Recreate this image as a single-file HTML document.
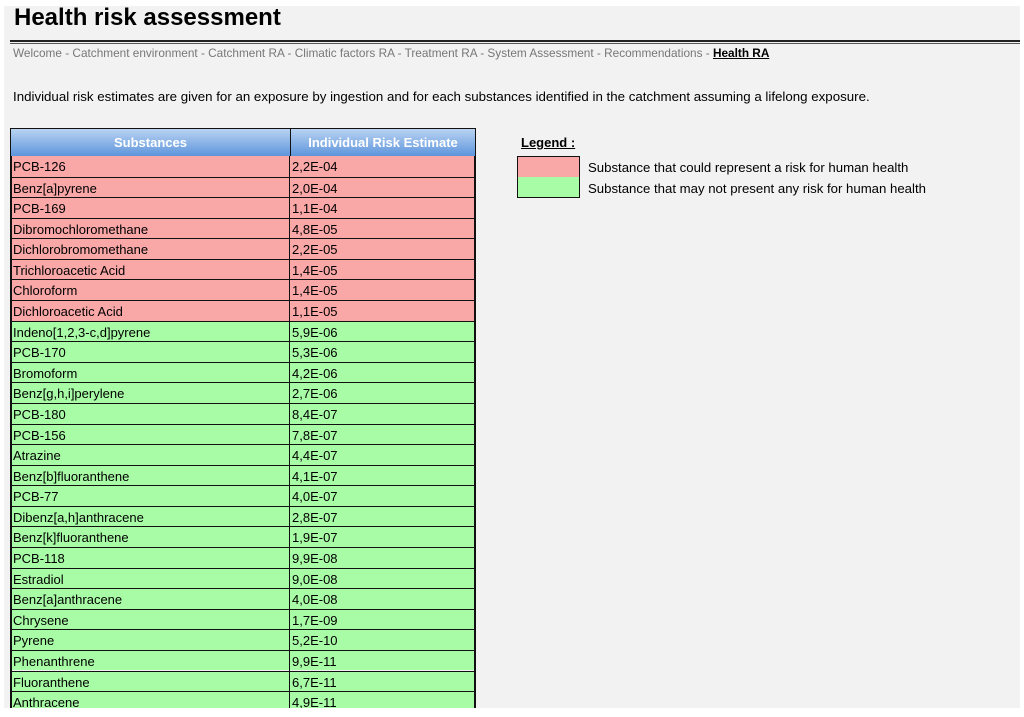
<!DOCTYPE html>
<html><head><style>
body{margin:0;background:#fff;font-family:"Liberation Sans",sans-serif;}
#pg{position:absolute;left:4px;top:6px;width:1016px;height:702px;background:#f2f2f2;overflow:hidden}
.a{position:absolute;white-space:nowrap}
.r{position:absolute;left:6px;width:466px;height:20.58px;box-sizing:border-box;border-top:1px solid #111;font-size:13px;color:#000}
.r span{position:absolute;top:3px}
</style></head><body>
<div id="pg">
<div class="a" style="left:10px;top:-2px;font-size:24px;font-weight:bold;color:#000">Health risk assessment</div>
<div class="a" style="left:6px;top:34px;width:1010px;height:2px;background:#222"></div>
<div class="a" style="left:6px;top:37px;width:1010px;height:1px;background:#555"></div>
<div class="a" style="left:9px;top:40px;font-size:11.8px;color:#777">Welcome - Catchment environment - Catchment RA - Climatic factors RA - Treatment RA - System Assessment - Recommendations - <b style="color:#000;text-decoration:underline">Health RA</b></div>
<div class="a" style="left:9px;top:83px;font-size:13.3px;color:#000">Individual risk estimates are given for an exposure by ingestion and for each substances identified in the catchment assuming a lifelong exposure.</div>
<div class="a" style="left:6px;top:122px;width:464px;height:27px;border:1px solid #111;background:linear-gradient(#b9d3f2,#5e95dc);color:#fff;font-weight:bold;font-size:13px">
<div class="a" style="left:0;width:279px;top:6px;text-align:center">Substances</div>
<div class="a" style="left:279px;top:0;width:1px;height:27px;background:#111"></div>
<div class="a" style="left:280px;width:184px;top:6px;text-align:center">Individual Risk Estimate</div>
</div>
<div id="rows"></div>
<div class="a" style="left:6px;top:150px;width:2px;height:560px;background:#111"></div>
<div class="a" style="left:470px;top:150px;width:2px;height:560px;background:#111"></div>
<div class="a" style="left:285px;top:150px;width:1px;height:560px;background:#111"></div>
<div class="a" style="left:517px;top:129px;font-size:13px;font-weight:bold;text-decoration:underline">Legend :</div>
<div class="a" style="left:513px;top:150px;width:61px;height:20px;border:1px solid #111;background:#f9a7a7"></div>
<div class="a" style="left:513px;top:171px;width:61px;height:20px;border:1px solid #111;border-top:0;background:#a9fca6"></div>
<div class="a" style="left:584px;top:154px;font-size:13.2px">Substance that could represent a risk for human health</div>
<div class="a" style="left:584px;top:175px;font-size:13.2px">Substance that may not present any risk for human health</div>
</div>
<script>
var d=[["PCB-126","2,2E-04"],["Benz[a]pyrene","2,0E-04"],["PCB-169","1,1E-04"],["Dibromochloromethane","4,8E-05"],["Dichlorobromomethane","2,2E-05"],["Trichloroacetic Acid","1,4E-05"],["Chloroform","1,4E-05"],["Dichloroacetic Acid","1,1E-05"],["Indeno[1,2,3-c,d]pyrene","5,9E-06"],["PCB-170","5,3E-06"],["Bromoform","4,2E-06"],["Benz[g,h,i]perylene","2,7E-06"],["PCB-180","8,4E-07"],["PCB-156","7,8E-07"],["Atrazine","4,4E-07"],["Benz[b]fluoranthene","4,1E-07"],["PCB-77","4,0E-07"],["Dibenz[a,h]anthracene","2,8E-07"],["Benz[k]fluoranthene","1,9E-07"],["PCB-118","9,9E-08"],["Estradiol","9,0E-08"],["Benz[a]anthracene","4,0E-08"],["Chrysene","1,7E-09"],["Pyrene","5,2E-10"],["Phenanthrene","9,9E-11"],["Fluoranthene","6,7E-11"],["Anthracene","4,9E-11"]];
var h="";for(var i=0;i<d.length;i++){var t=150+i*20.58;h+='<div class="r" style="top:'+t.toFixed(2)+'px;background:'+(i<8?'#f9a7a7':'#a9fca6')+';'+(i==0?'border-top:0;':'')+'"><span style="left:3px">'+d[i][0]+'</span><span style="left:282px">'+d[i][1]+'</span></div>';}
document.getElementById("rows").outerHTML=h;
</script>
</body></html>
